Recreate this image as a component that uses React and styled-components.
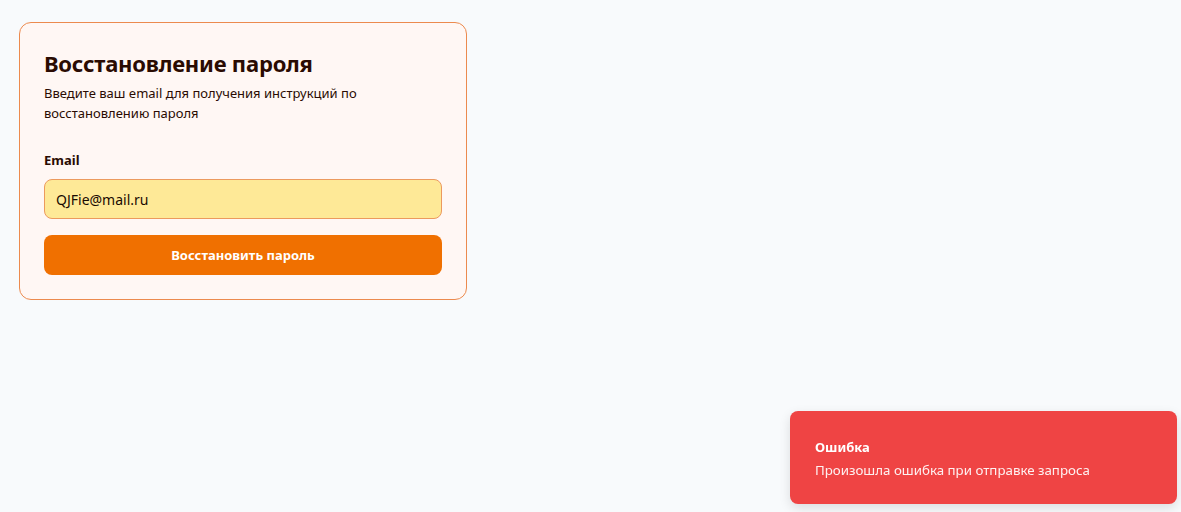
import React, { useState } from 'react';
import styled, { createGlobalStyle } from 'styled-components';

const GlobalStyle = createGlobalStyle`
  * { box-sizing: border-box; }
  body {
    margin: 0;
    background: #f8fafc;
    font-family: "Noto Sans", "Open Sans", sans-serif;
  }
`;

const Page = styled.div`
  min-height: 100vh;
  padding: 22px 19px;
`;

const Card = styled.div`
  width: 448px;
  background: #fff7f4;
  border: 1px solid #ec8a4e;
  border-radius: 12px;
  padding: 24px 24px 24px;
  display: flex;
  flex-direction: column;
`;

const Title = styled.h1`
  margin: 0;
  font-size: 22px;
  line-height: 32px;
  font-weight: 700;
  color: #2a0b02;
  letter-spacing: -0.2px;
`;

const Subtitle = styled.p`
  margin: 4px 0 0;
  font-size: 13px;
  line-height: 20px;
  color: #2a0b02;
  width: 340px;
`;

const Form = styled.form`
  margin-top: 27px;
  display: flex;
  flex-direction: column;
`;

const Label = styled.label`
  font-size: 13px;
  line-height: 20px;
  font-weight: 700;
  color: #2a0b02;
`;

const Input = styled.input`
  margin-top: 9px;
  height: 40px;
  width: 100%;
  border: 1px solid #ec9a5e;
  border-radius: 8px;
  background: #fee997;
  padding: 0 11px;
  font-family: inherit;
  font-size: 14px;
  color: #1a0a02;
  outline: none;
`;

const Button = styled.button`
  margin-top: 16px;
  height: 40px;
  width: 100%;
  border: none;
  border-radius: 8px;
  background: #f07000;
  color: #fff;
  font-family: inherit;
  font-size: 13px;
  font-weight: 700;
  cursor: pointer;
`;

const Toast = styled.div`
  position: fixed;
  right: 4px;
  bottom: 8px;
  width: 387px;
  height: 93px;
  background: #ef4444;
  border-radius: 8px;
  box-shadow: 0 4px 12px rgba(0, 0, 0, 0.12);
  padding: 27px 25px;
  color: #fff;
`;

const ToastTitle = styled.div`
  font-size: 13px;
  font-weight: 700;
  line-height: 18px;
`;

const ToastText = styled.div`
  margin-top: 5px;
  font-size: 13.3px;
  line-height: 18px;
  opacity: 0.92;
`;

const App = () => {
  const [email, setEmail] = useState('QJFie@mail.ru');

  return (
    <Page>
      <GlobalStyle />
      <Card>
        <Title>Восстановление пароля</Title>
        <Subtitle>Введите ваш email для получения инструкций по восстановлению пароля</Subtitle>
        <Form onSubmit={(e) => e.preventDefault()}>
          <Label htmlFor="email">Email</Label>
          <Input
            id="email"
            type="email"
            value={email}
            onChange={(e) => setEmail(e.target.value)}
          />
          <Button type="submit">Восстановить пароль</Button>
        </Form>
      </Card>
      <Toast>
        <ToastTitle>Ошибка</ToastTitle>
        <ToastText>Произошла ошибка при отправке запроса</ToastText>
      </Toast>
    </Page>
  );
};

export default App;
